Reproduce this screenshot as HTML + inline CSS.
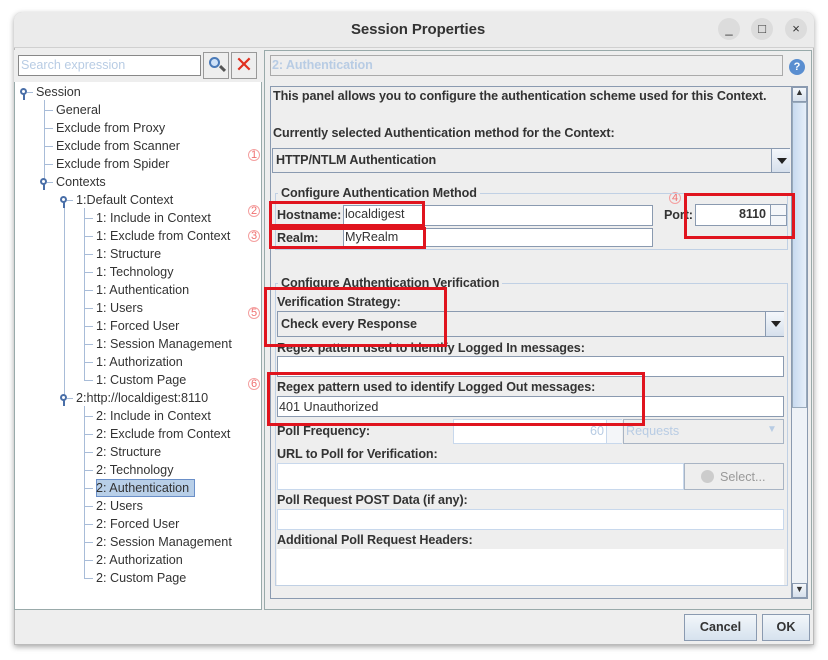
<!DOCTYPE html>
<html><head><meta charset="utf-8"><style>
*{box-sizing:border-box;margin:0;padding:0}
body{width:828px;height:660px;background:#fff;font-family:"Liberation Sans","DejaVu Sans",sans-serif;font-size:12.6px;color:#333;position:relative;overflow:hidden}
.a{position:absolute}
.win{left:14px;top:12px;width:800px;height:633px;background:#eee;border:1px solid #bbb;border-radius:8px 8px 0 0;box-shadow:0 2px 6px rgba(0,0,0,.35)}
.tb{left:14px;top:12px;width:800px;height:36px;background:#ebebeb;border-radius:8px 8px 0 0;border-bottom:1px solid #d0d0d0}
.wb{width:22px;height:22px;border-radius:11px;background:#dcdcdc;top:18px;font-size:13px;text-align:center;line-height:22px;color:#333}
.t{position:absolute;white-space:nowrap;font-size:12.6px;color:#333}
.ln{position:absolute;background:#a8bcd8}
.fld{position:absolute;background:#fff;border:1px solid #8a9ab0}
.b{font-weight:bold;letter-spacing:-0.1px}
.red{position:absolute;border:3px solid #e0141e}
.rn{position:absolute;color:#f07070;font-size:11px;width:12px;height:12px;border:1px solid #f4a0a0;border-radius:6px;line-height:10px;text-align:center}
.btn{position:absolute;border:1px solid #8a9ab0;background:linear-gradient(#f2f6fa,#d6e2ee);font-weight:bold;text-align:center;line-height:24px;color:#333}
.arr{position:absolute;width:19px;background:linear-gradient(#f4f7fb,#d6e0ec);border-left:1px solid #8a9ab0}
.arr:after{content:"";position:absolute;left:5px;top:50%;margin-top:-3px;border-left:5px solid transparent;border-right:5px solid transparent;border-top:6px solid #222}
.sb{position:absolute;left:792px;width:15px;height:15px;border:1px solid #8a9ab0;background:linear-gradient(#f4f7fb,#d6e0ec)}
</style></head><body>
<div class="a win"></div>
<div class="a tb"></div>
<div class="t b" style="left:351px;top:21px;font-size:15px">Session Properties</div>
<div class="a wb" style="left:718px">_</div>
<div class="a wb" style="left:751px">□</div>
<div class="a wb" style="left:785px">×</div>

<div class="a" style="left:14px;top:50px;width:248px;height:560px;background:#fff;border:1px solid #9aa"></div>
<div class="a" style="left:14px;top:50px;width:248px;height:32px;background:#eee"></div>
<div class="fld" style="left:18px;top:55px;width:183px;height:21px;border-color:#888"></div>
<div class="t" style="left:21px;top:58px;color:#b8cce4">Search expression</div>
<div class="a" style="left:203px;top:52px;width:26px;height:27px;border:1px solid #999;background:#eee"></div>
<div class="a" style="left:209px;top:57px;width:11px;height:11px;border:2px solid #4a7ab8;border-radius:6px;background:#cfe2f8"></div>
<div class="a" style="left:219px;top:67px;width:7px;height:3px;background:#555;transform:rotate(45deg)"></div>
<div class="a" style="left:231px;top:52px;width:26px;height:27px;border:1px solid #999;background:#eee;color:#e03020;font-size:22px;line-height:24px;text-align:center;font-weight:bold">✕</div>

<div class="ln" style="left:44px;top:100px;width:1px;height:84px"></div>
<div class="ln" style="left:64px;top:208px;width:1px;height:192px"></div>
<div class="ln" style="left:84px;top:208px;width:1px;height:172px"></div>
<div class="ln" style="left:84px;top:406px;width:1px;height:172px"></div>
<div id="tree"></div>
<div class="a" style="left:96px;top:479px;width:99px;height:18px;background:#b8cfe8;border:1px solid #6a8fc8"></div>

<div class="rn" style="left:248px;top:149px">1</div>
<div class="rn" style="left:248px;top:205px">2</div>
<div class="rn" style="left:248px;top:230px">3</div>
<div class="rn" style="left:669px;top:192px">4</div>
<div class="rn" style="left:248px;top:307px">5</div>
<div class="rn" style="left:248px;top:378px">6</div>

<div class="a" style="left:264px;top:50px;width:548px;height:560px;border:1px solid #9aa"></div>
<div class="fld" style="left:270px;top:55px;width:513px;height:21px;border-color:#aaa;background:#eee"></div>
<div class="t b" style="left:272px;top:58px;color:#b8cce4">2: Authentication</div>
<div class="a" style="left:789px;top:59px;width:16px;height:16px;border-radius:8px;background:#5a8ed0;color:#fff;font-size:11px;text-align:center;line-height:16px;font-weight:bold">?</div>
<div class="a" style="left:270px;top:86px;width:538px;height:513px;border:1px solid #8a9ab0"></div>
<div class="a" style="left:791px;top:87px;width:16px;height:511px;background:#eef2f7;border-left:1px solid #8a9ab0"></div>
<div class="a" style="left:792px;top:102px;width:15px;height:306px;background:linear-gradient(90deg,#c8daf0,#e6eff9);border:1px solid #9ab"></div>
<div class="sb" style="top:87px"></div><div class="t" style="left:795px;top:87px;font-size:9px">▲</div>
<div class="sb" style="top:583px"></div><div class="t" style="left:795px;top:584px;font-size:9px">▼</div>

<div class="t b" style="left:273px;top:89px">This panel allows you to configure the authentication scheme used for this Context.</div>
<div class="t b" style="left:273px;top:126px">Currently selected Authentication method for the Context:</div>
<div class="a" style="left:272px;top:148px;width:518px;height:25px;border:1px solid #8a9ab0;background:#eee"></div>
<div class="arr" style="left:771px;top:149px;height:23px"></div>
<div class="t b" style="left:276px;top:153px">HTTP/NTLM Authentication</div>

<div class="a" style="left:275px;top:193px;width:513px;height:57px;border:1px solid #c0d0e4"></div>
<div class="t b" style="left:278px;top:186px;background:#eee;padding:0 3px">Configure Authentication Method</div>
<div class="t b" style="left:277px;top:208px">Hostname:</div>
<div class="fld" style="left:343px;top:205px;width:310px;height:21px"></div>
<div class="t" style="left:345px;top:207px">localdigest</div>
<div class="t b" style="left:277px;top:231px">Realm:</div>
<div class="fld" style="left:343px;top:228px;width:310px;height:19px"></div>
<div class="t" style="left:345px;top:230px">MyRealm</div>
<div class="t b" style="left:664px;top:208px">Port:</div>
<div class="fld" style="left:695px;top:204px;width:92px;height:22px"></div>
<div class="t b" style="left:739px;top:207px">8110</div>
<div class="a" style="left:770px;top:205px;width:16px;height:20px;border-left:1px solid #8a9ab0;background:#f4f6f9"></div>
<div class="a" style="left:770px;top:215px;width:16px;height:1px;background:#8a9ab0"></div>

<div class="a" style="left:275px;top:283px;width:513px;height:303px;border:1px solid #c0d0e4"></div>
<div class="t b" style="left:278px;top:276px;background:#eee;padding:0 3px">Configure Authentication Verification</div>
<div class="t b" style="left:277px;top:295px">Verification Strategy:</div>
<div class="a" style="left:277px;top:311px;width:507px;height:26px;border:1px solid #8a9ab0;background:#eee"></div>
<div class="arr" style="left:765px;top:312px;height:24px"></div>
<div class="t b" style="left:281px;top:317px">Check every Response</div>
<div class="t b" style="left:277px;top:341px">Regex pattern used to identify Logged In messages:</div>
<div class="fld" style="left:277px;top:356px;width:507px;height:21px"></div>
<div class="t b" style="left:277px;top:380px">Regex pattern used to identify Logged Out messages:</div>
<div class="fld" style="left:277px;top:396px;width:507px;height:21px"></div>
<div class="t" style="left:279px;top:400px">401 Unauthorized</div>
<div class="t b" style="left:277px;top:424px">Poll Frequency:</div>
<div class="fld" style="left:453px;top:419px;width:169px;height:25px;border-color:#c8d8ec"></div>
<div class="t" style="left:590px;top:424px;color:#b8cce4">60</div>
<div class="a" style="left:606px;top:420px;width:16px;height:23px;border-left:1px solid #c8d8ec;background:#f4f6f9"></div>
<div class="a" style="left:623px;top:419px;width:161px;height:25px;border:1px solid #a8b4c4;background:#eee"></div>
<div class="t" style="left:626px;top:424px;color:#b8cce4">Requests</div>
<div class="t" style="left:767px;top:424px;color:#b8cce4;font-size:10px">▼</div>
<div class="t b" style="left:277px;top:447px">URL to Poll for Verification:</div>
<div class="fld" style="left:277px;top:463px;width:407px;height:27px;border-color:#c8d8ec"></div>
<div class="a" style="left:684px;top:463px;width:100px;height:27px;border:1px solid #a8b4c4;background:#eee"></div>
<div class="a" style="left:701px;top:470px;width:13px;height:13px;border-radius:7px;background:#ccc"></div>
<div class="t" style="left:720px;top:470px;color:#999">Select...</div>
<div class="t b" style="left:277px;top:493px">Poll Request POST Data (if any):</div>
<div class="fld" style="left:277px;top:509px;width:507px;height:21px;border-color:#c8d8ec"></div>
<div class="t b" style="left:277px;top:533px">Additional Poll Request Headers:</div>
<div class="a" style="left:277px;top:549px;width:507px;height:36px;background:#fff"></div>

<div class="red" style="left:269px;top:201px;width:156px;height:26px"></div>
<div class="red" style="left:269px;top:227px;width:157px;height:22px"></div>
<div class="red" style="left:684px;top:193px;width:111px;height:46px"></div>
<div class="red" style="left:264px;top:287px;width:183px;height:60px"></div>
<div class="red" style="left:267px;top:372px;width:378px;height:54px"></div>

<div class="btn" style="left:684px;top:614px;width:73px;height:27px">Cancel</div>
<div class="btn" style="left:762px;top:614px;width:48px;height:27px">OK</div>

<script>
var items=[["Session",36,0],["General",56,1],["Exclude from Proxy",56,1],["Exclude from Scanner",56,1],["Exclude from Spider",56,1],["Contexts",56,0],["1:Default Context",76,0],
["1: Include in Context",96,1],["1: Exclude from Context",96,1],["1: Structure",96,1],["1: Technology",96,1],["1: Authentication",96,1],["1: Users",96,1],["1: Forced User",96,1],["1: Session Management",96,1],["1: Authorization",96,1],["1: Custom Page",96,1],
["2:http://localdigest:8110",76,0],["2: Include in Context",96,1],["2: Exclude from Context",96,1],["2: Structure",96,1],["2: Technology",96,1],["2: Authentication",96,1],["2: Users",96,1],["2: Forced User",96,1],["2: Session Management",96,1],["2: Authorization",96,1],["2: Custom Page",96,1]];
var h="";
items.forEach(function(it,i){var y=92+i*18;
h+='<div class="t" style="left:'+it[1]+'px;top:'+(y-7)+'px;z-index:2">'+it[0]+'</div>';
if(it[2]){h+='<div class="ln" style="left:'+(it[1]-12)+'px;top:'+y+'px;width:9px;height:1px"></div>';}
else{var x=it[1]-13;h+='<div class="a" style="left:'+(x-3)+'px;top:'+(y-4)+'px;width:7px;height:7px;border:2px solid #4a6fa8;border-radius:4px;background:#fff"></div><div class="a" style="left:'+x+'px;top:'+(y+2)+'px;width:1.5px;height:6px;background:#4a6fa8"></div><div class="ln" style="left:'+(x+4)+'px;top:'+y+'px;width:6px;height:1px"></div>';}
});
document.getElementById("tree").innerHTML=h;
</script>
</body></html>
